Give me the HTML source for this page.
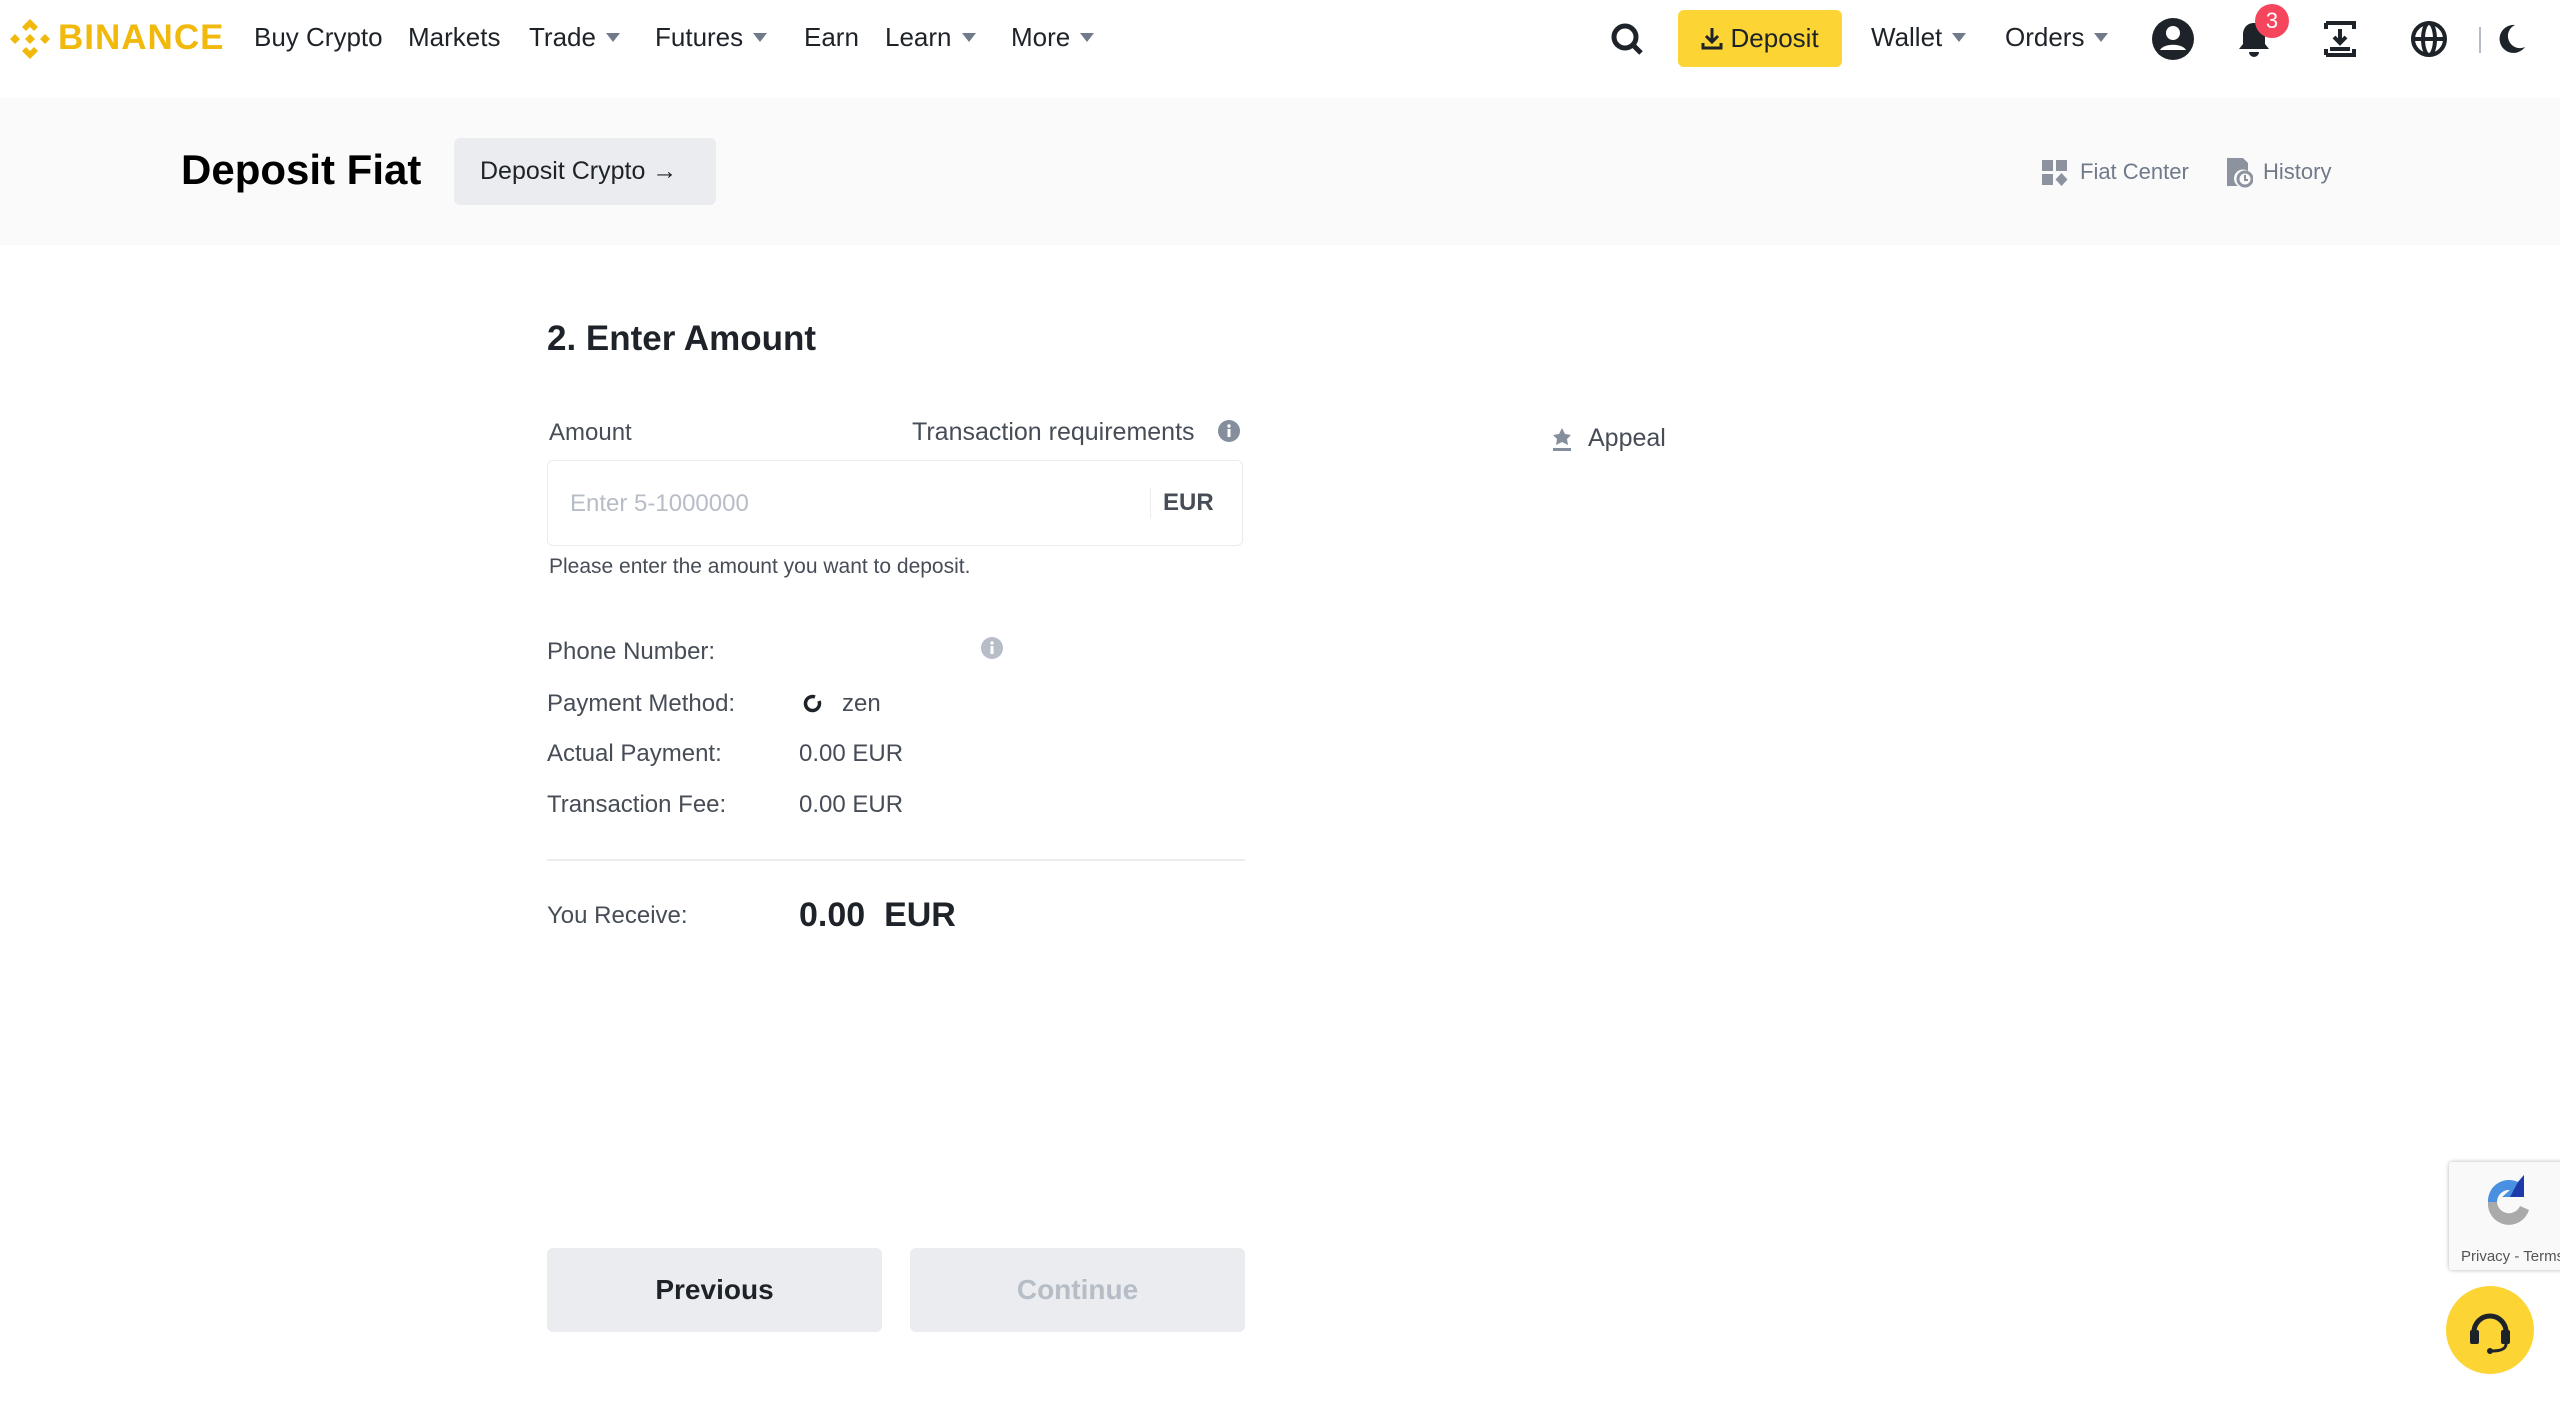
<!DOCTYPE html>
<html><head><meta charset="utf-8">
<style>
*{margin:0;padding:0;box-sizing:border-box}
body{width:2560px;height:1402px;overflow:hidden;background:#fff;font-family:"Liberation Sans",sans-serif;color:#1e2329;position:relative}
.a{position:absolute;white-space:nowrap}
.nav{font-size:26px;color:#1e2329;top:22px}
.caret{display:inline-block;width:0;height:0;border-left:7px solid transparent;border-right:7px solid transparent;border-top:9px solid #707a8a;margin-left:10px;vertical-align:4px}
.lbl{font-size:24px;color:#474d57}
.val{font-size:24px;color:#474d57}
</style></head><body>
<svg class="a" style="left:8px;top:17px" width="44" height="44" viewBox="0 0 44 44" fill="#f0b90b">
<path d="M22 2l8 8-4 4-4-4-4 4-4-4z"/><path d="M22 42l-8-8 4-4 4 4 4-4 4 4z"/><path d="M2 22l5-5 5 5-5 5z"/><path d="M42 22l-5-5-5 5 5 5z"/><path d="M22 17l5 5-5 5-5-5z"/>
</svg>
<div class="a" style="left:58px;top:18px;font-size:35px;font-weight:bold;color:#f0b90b;letter-spacing:1px">BINANCE</div>
<div class="a nav" style="left:254px">Buy Crypto</div>
<div class="a nav" style="left:408px">Markets</div>
<div class="a nav" style="left:529px">Trade<span class="caret"></span></div>
<div class="a nav" style="left:655px">Futures<span class="caret"></span></div>
<div class="a nav" style="left:804px">Earn</div>
<div class="a nav" style="left:885px">Learn<span class="caret"></span></div>
<div class="a nav" style="left:1011px">More<span class="caret"></span></div>
<svg class="a" style="left:1610px;top:22px" width="34" height="34" viewBox="0 0 34 34"><circle cx="15" cy="15" r="11" fill="none" stroke="#1e2329" stroke-width="5"/><path d="M23 23l8 8" stroke="#1e2329" stroke-width="5"/></svg>
<div class="a" style="left:1678px;top:10px;width:164px;height:57px;background:#fcd535;border-radius:6px;font-size:26px;line-height:57px;text-align:center;color:#1e2329">
<svg width="22" height="24" viewBox="0 0 22 24" style="vertical-align:-3px"><path d="M11 2v13M5 10l6 6 6-6M2 17v5h18v-5" stroke="#1e2329" stroke-width="3" fill="none"/></svg> Deposit</div>
<div class="a nav" style="left:1871px">Wallet<span class="caret"></span></div>
<div class="a nav" style="left:2005px">Orders<span class="caret"></span></div>
<svg class="a" style="left:2150px;top:16px" width="46" height="46" viewBox="0 0 46 46"><circle cx="23" cy="23" r="21" fill="#1e2329"/><circle cx="23" cy="17" r="7" fill="#fff"/><path d="M10 34c4-7 22-7 26 0" fill="#fff"/></svg>
<svg class="a" style="left:2236px;top:20px" width="36" height="40" viewBox="0 0 36 40"><path d="M18 3c-7 0-11 5-11 12v9l-4 5h30l-4-5v-9c0-7-4-12-11-12z" fill="#1e2329"/><path d="M13 32a5 5 0 0010 0z" fill="#1e2329"/></svg>
<div class="a" style="left:2255px;top:4px;width:34px;height:34px;border-radius:50%;background:#f6465d;color:#fff;font-size:22px;line-height:34px;text-align:center">3</div>
<svg class="a" style="left:2324px;top:21px" width="32" height="36" viewBox="0 0 32 36"><path d="M2 2h28v6M2 2v6M2 34h28v-6M2 34v-6" stroke="#1e2329" stroke-width="4" fill="none"/><path d="M16 8v14M10 16l6 6 6-6" stroke="#1e2329" stroke-width="4" fill="none"/><path d="M6 28h20" stroke="#1e2329" stroke-width="4"/></svg>
<svg class="a" style="left:2410px;top:20px" width="38" height="38" viewBox="0 0 38 38"><circle cx="19" cy="19" r="16" fill="none" stroke="#1e2329" stroke-width="4"/><ellipse cx="19" cy="19" rx="6" ry="16" fill="none" stroke="#1e2329" stroke-width="4"/><path d="M3 19h32" stroke="#1e2329" stroke-width="4"/></svg>
<div class="a" style="left:2479px;top:27px;width:2px;height:26px;background:#b7bdc6"></div>
<svg class="a" style="left:2497px;top:23px" width="30" height="32" viewBox="0 0 30 32"><path d="M18 2a14 14 0 1010 22A12 12 0 0118 2z" fill="#1e2329"/></svg>

<div class="a" style="left:0;top:98px;width:2560px;height:147px;background:#fafafa"></div>
<div class="a" style="left:181px;top:146px;font-size:42px;font-weight:bold;color:#000">Deposit Fiat</div>
<div class="a" style="left:454px;top:138px;width:262px;height:67px;background:#eaecef;border-radius:6px;font-size:25px;line-height:67px;padding-left:26px;color:#1e2329">Deposit Crypto <b>&#8594;</b></div>
<svg class="a" style="left:2042px;top:160px" width="26" height="26" viewBox="0 0 26 26" fill="#8c939f"><rect x="0" y="0" width="11" height="11"/><rect x="14" y="0" width="11" height="11"/><rect x="0" y="14" width="11" height="11"/><path d="M19.5 13l6 6.5-6 6.5-6-6.5z"/></svg>
<div class="a" style="left:2080px;top:159px;font-size:22px;color:#707a8a">Fiat Center</div>
<svg class="a" style="left:2227px;top:158px" width="26" height="30" viewBox="0 0 26 30" fill="#8c939f"><path d="M0 0h16l5 5v8a9 9 0 00-10 15H0z"/><circle cx="18" cy="21" r="7" fill="none" stroke="#8c939f" stroke-width="3"/><path d="M18 17v5h3" stroke="#8c939f" stroke-width="2" fill="none"/></svg>
<div class="a" style="left:2263px;top:159px;font-size:22px;color:#707a8a">History</div>

<div class="a" style="left:547px;top:319px;font-size:35px;font-weight:bold;color:#1e2329">2. Enter Amount</div>
<div class="a lbl" style="left:549px;top:419px">Amount</div>
<div class="a lbl" style="left:912px;top:418px;font-size:25px">Transaction requirements</div>
<svg class="a" style="left:1218px;top:420px" width="22" height="22" viewBox="0 0 22 22"><circle cx="11" cy="11" r="11" fill="#848e9c"/><rect x="9.5" y="9" width="3" height="8" fill="#fff"/><circle cx="11" cy="6" r="1.7" fill="#fff"/></svg>
<div class="a" style="left:547px;top:460px;width:696px;height:86px;border:1px solid #eaecef;border-radius:6px"></div>
<div class="a" style="left:570px;top:490px;font-size:24px;color:#b7bdc6">Enter 5-1000000</div>
<div class="a" style="left:1150px;top:488px;width:1px;height:30px;background:#eaecef"></div>
<div class="a" style="left:1163px;top:489px;font-size:24px;color:#474d57;font-weight:bold">EUR</div>
<div class="a" style="left:549px;top:555px;font-size:21px;color:#474d57">Please enter the amount you want to deposit.</div>
<div class="a lbl" style="left:547px;top:638px">Phone Number:</div>
<svg class="a" style="left:981px;top:637px" width="22" height="22" viewBox="0 0 22 22"><circle cx="11" cy="11" r="11" fill="#b7bdc6"/><rect x="9.5" y="9" width="3" height="8" fill="#fff"/><circle cx="11" cy="6" r="1.7" fill="#fff"/></svg>
<div class="a lbl" style="left:547px;top:690px">Payment Method:</div>
<svg class="a" style="left:803px;top:694px" width="20" height="20" viewBox="0 0 20 20"><path d="M12 3A7 7 0 1 0 16 7" fill="none" stroke="#1e2329" stroke-width="3.5"/></svg>
<div class="a val" style="left:842px;top:690px">zen</div>
<div class="a lbl" style="left:547px;top:740px">Actual Payment:</div>
<div class="a val" style="left:799px;top:740px">0.00 EUR</div>
<div class="a lbl" style="left:547px;top:791px">Transaction Fee:</div>
<div class="a val" style="left:799px;top:791px">0.00 EUR</div>
<div class="a" style="left:547px;top:859px;width:698px;height:2px;background:#eaecef"></div>
<div class="a lbl" style="left:547px;top:902px">You Receive:</div>
<div class="a" style="left:799px;top:896px;font-size:34px;font-weight:bold;color:#1e2329">0.00 &nbsp;EUR</div>

<svg class="a" style="left:1551px;top:427px" width="22" height="24" viewBox="0 0 22 24" fill="#848e9c"><path d="M11 1l3 6 6 1-4 4 1 6-6-3-6 3 1-6-4-4 6-1z"/><rect x="2" y="21" width="18" height="3"/></svg>
<div class="a" style="left:1588px;top:424px;font-size:25px;color:#474d57">Appeal</div>

<div class="a" style="left:547px;top:1248px;width:335px;height:84px;background:#eaecef;border-radius:6px;font-size:28px;font-weight:bold;line-height:84px;text-align:center;color:#1e2329">Previous</div>
<div class="a" style="left:910px;top:1248px;width:335px;height:84px;background:#eaecef;border-radius:6px;font-size:28px;font-weight:bold;line-height:84px;text-align:center;color:#b7bdc6">Continue</div>

<div class="a" style="left:2449px;top:1162px;width:130px;height:108px;background:#f9f9f9;border-radius:3px;box-shadow:0 0 4px rgba(0,0,0,.3)"></div>
<svg class="a" style="left:2478px;top:1172px" width="62" height="60" viewBox="0 0 62 60"><path d="M10 30A21 21 0 0 1 40 10l6-7v22H24l8-7A12 12 0 0 0 19 30z" fill="#4a90e2"/><path d="M40 10l6-7v22H32z" fill="#1c3aa9"/><path d="M10 30h9a12 12 0 0 0 23 4l9 4A21 21 0 0 1 10 30z" fill="#aaa"/></svg>
<div class="a" style="left:2461px;top:1248px;font-size:15px;color:#555">Privacy - Terms</div>
<div class="a" style="left:2446px;top:1286px;width:88px;height:88px;border-radius:50%;background:#fcd535"></div>
<svg class="a" style="left:2466px;top:1306px" width="48" height="48" viewBox="0 0 48 48"><path d="M8 26a16 16 0 0 1 32 0" fill="none" stroke="#1e2329" stroke-width="5"/><rect x="4" y="24" width="9" height="14" rx="2" fill="#1e2329"/><rect x="35" y="24" width="9" height="14" rx="2" fill="#1e2329"/><path d="M40 38c0 5-6 7-14 7" fill="none" stroke="#1e2329" stroke-width="3"/><circle cx="24" cy="45" r="3" fill="#1e2329"/></svg>
</body></html>
